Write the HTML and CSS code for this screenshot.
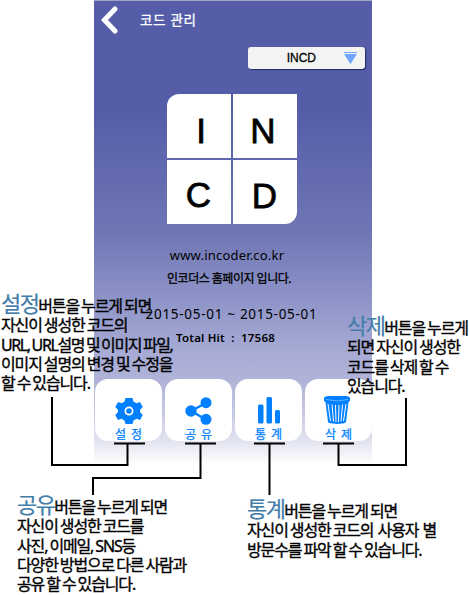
FILE: index.html
```html
<!DOCTYPE html>
<html lang="ko">
<head>
<meta charset="utf-8">
<title>코드 관리</title>
<link rel="stylesheet" href="styles.css">
</head>
<body>
<main class="guide">
  <section class="phone">
    <header class="bar">
      <svg class="back" width="18" height="28" viewBox="0 0 18 28"><path d="M15 3 4.500 14 15 25"/></svg>
      <h1>코드 관리</h1>
    </header>
    <div class="select"><span>INCD</span>
      <svg width="14" height="12" viewBox="0 0 14 12"><path d="M0 0h13v1H0zM0 2h13L6.500 12z"/></svg>
    </div>
    <div class="tiles"><b>I</b><b class="n">N</b><b class="c">C</b><b class="d">D</b></div>
    <div class="info">
      <p class="url">www.incoder.co.kr</p>
      <p class="name">인코더스 홈페이지 입니다.</p>
      <p class="period">2015-05-01 ~ 2015-05-01</p>
      <p class="hits">Total Hit &nbsp;: &nbsp;17568</p>
    </div>
    <nav class="actions">
      <div class="action"><svg width="28" height="28" viewBox="0 0 28 28"><path fill-rule="evenodd" d="M10.500 1h7l1 3.500 3 1.700L25 5l2.700 5-2.700 3v2l2.700 3-2.700 5-3.500-1.200-3 1.700-1 3.500h-7l-1-3.500-3-1.700L3 23 .3 18 3 15v-2L.3 10 3 5l3.500 1.200 3-1.700zM14 9.500a4.500 4.500 0 1 0 0 9 4.500 4.500 0 1 0 0-9z"/><circle cx="14" cy="14" r="2.800"/></svg><span>설 정</span></div>
      <div class="action"><svg width="28" height="28" viewBox="0 0 28 28"><path class="link" d="M21 6 6 14l15 8.500"/><circle cx="6" cy="14" r="5.700"/><circle cx="21" cy="5.700" r="5.500"/><circle cx="21" cy="22.300" r="5.500"/></svg><span>공 유</span></div>
      <div class="action"><svg width="28" height="28" viewBox="0 0 28 28"><rect x="3" y="7.500" width="5.500" height="19" rx="1.500"/><rect x="11.500" y="0" width="5.500" height="26.500" rx="1.500"/><rect x="20" y="13" width="5" height="13.500" rx="1.500"/></svg><span>통 계</span></div>
      <div class="action"><svg class="bin" width="28" height="28" viewBox="0 0 28 28"><path d="M1 2C2-1.500 26-1.500 27 2v3l-1.500 1L23 26c-1 2.500-17 2.500-18 0L2.500 6 1 5z"/><path class="slats" d="m5 8 2.500 17M9 8.500l1.500 17M12.500 9l.5 17M16 9l-.5 17M19.500 8.500 18 25.500M23 8l-2.500 17"/><path class="rim" d="M3 3.500q11 3 22 0"/></svg><span>삭 제</span></div>
    </nav>
  </section>

  <svg class="leaders" width="470" height="595" viewBox="0 0 470 595">
    <path d="M114 443.500h31M127.500 444v21H52v-68M185 443.500h31M200.500 444v34H93v17M254 443.500h31M269.500 444v51M323 443.500h31M338.500 444v21H406v-67"/>
  </svg>

  <p class="note settings"><span class="lead"><em>설정</em>버튼을 누르게 되면</span><span>자신이 생성한 코드의</span><span class="mixed">URL, URL설명 및 이미지 파일,</span><span>이미지 설명의 변경 및 수정을</span><span>할 수 있습니다.</span></p>
  <p class="note delete"><span class="lead"><em>삭제</em>버튼을 누르게</span><span>되면 자신이 생성한</span><span>코드를 삭제 할 수</span><span>있습니다.</span></p>
  <p class="note share"><span class="lead"><em>공유</em>버튼을 누르게 되면</span><span>자신이 생성한 코드를</span><span>사진, 이메일, SNS등</span><span>다양한 방법으로 다른 사람과</span><span>공유 할 수 있습니다.</span></p>
  <p class="note stats"><span class="lead"><em>통계</em>버튼을 누르게 되면</span><span>자신이 생성한 코드의&nbsp; 사용자 &nbsp;별</span><span>방문수를 파악 할 수 있습니다.</span></p>
</main>
</body>
</html>
```
FILE: styles.css
```css
* { box-sizing: border-box; }
body { margin: 0; background: #fff; color: #000; font-family: "Noto Sans", "Noto Sans CJK KR", sans-serif; }
p, h1 { margin: 0; }
.guide { position: relative; width: 470px; height: 595px; overflow: hidden; }
.phone {
  width: 278px; height: 463px; margin-left: 94px;
  display: flex; flex-direction: column;
  border-top: 1px solid #a0a3c4;
  background: linear-gradient(#555da9 0, #555da9 110px, #7077b5 235px, #8f95c8 300px, #a7abd5 353px, #b1b3d8 380px, #c5c7e2 410px, #e2e3f0 440px, #fff 463px);
}
.bar { display: flex; align-items: center; height: 37px; padding-left: 6px; }
.back { fill: none; stroke: #fff; stroke-width: 5; stroke-linecap: round; stroke-linejoin: miter; }
.bar h1 { margin-left: 22px; color: #fff; font-size: 13.500px; font-weight: 400; line-height: 20px; letter-spacing: .7px; -webkit-text-stroke: .3px #fff; }
.select {
  display: flex; align-items: center; justify-content: flex-end;
  width: 117px; height: 22px; margin: 9px 0 0 154px; padding-right: 7px;
  background: #f3f3f3; border-radius: 3px; box-shadow: 1px 1px 1px #252b60;
  font: 12px "Liberation Sans", sans-serif; -webkit-text-stroke: .3px #000;
}
.select span { margin-right: 28px; }
.select svg { fill: #70a5ff; -webkit-text-stroke: 0; }
.tiles {
  display: grid; grid-template-columns: 64px 64px; grid-template-rows: 64px 64px; gap: 2px;
  width: 130px; margin: 25px 0 0 72.500px;
}
.tiles b {
  display: flex; align-items: center; justify-content: center; padding: 9px 0 0 5px;
  background: #fff; font: 35px/1 "Liberation Sans", sans-serif; -webkit-text-stroke: .8px #000;
}
.tiles b:first-child { border-top-left-radius: 12px; }
.tiles .n { padding-left: 0; padding-right: 3px; }
.tiles .c { padding: 5px 0 0; }
.tiles .d { border-bottom-right-radius: 12px; padding: 7px 0 0; }
.info { height: 155px; text-align: center; line-height: 20px; padding-top: 21px; }
.url { font-size: 13px; letter-spacing: .2px; margin-right: 12px; }
.name { font-size: 12px; letter-spacing: -.5px; margin: 4px 8px 0 0; -webkit-text-stroke: .3px #000; }
.period { font-size: 13.500px; letter-spacing: .7px; margin: 15px 3px 0 0; }
.hits { font-size: 11.500px; font-weight: 600; letter-spacing: .2px; margin: 4px 15px 0 0; }
.actions { display: flex; gap: 3px; padding-left: 1px; }
.action { display: flex; flex-direction: column; align-items: center; width: 67px; height: 62px; padding-top: 18px; background: #fff; border-radius: 13px; }
.action svg { flex: none; fill: #0080ff; }
.action .bin { margin-top: -1px; margin-bottom: 1px; position: relative; left: -2px; }
.action span { color: #0080ff; font-size: 12px; line-height: 16px; margin-top: 2px; word-spacing: 2px; -webkit-text-stroke: .25px #0080ff; }
.link { fill: none; stroke: #0080ff; stroke-width: 2.5; }
.action .slats, .action .rim { fill: none; stroke: #fff; stroke-width: 1; }
.action .rim { stroke-width: .4; }
.leaders { position: absolute; inset: 0; fill: none; stroke: #000; stroke-width: 2; }
.note { position: absolute; color: #000; font-size: 16px; line-height: 19.250px; letter-spacing: -1.15px; word-spacing: -.9px; white-space: nowrap; -webkit-text-stroke: .35px #000; }
.note span { display: block; width: max-content; height: 19.250px; }
.note .lead { margin-top: -3px; margin-bottom: 3px; }
.note .mixed { letter-spacing: -1.4px; }
.note em { font-style: normal; font-size: 22px; line-height: 19px; letter-spacing: -1.6px; color: #427daa; -webkit-text-stroke: .2px #427daa; }
.settings { left: 1px; top: 297px; }
.delete { left: 347px; top: 319px; }
.share { left: 17px; top: 498px; }
.stats { left: 247px; top: 502px; }
```
